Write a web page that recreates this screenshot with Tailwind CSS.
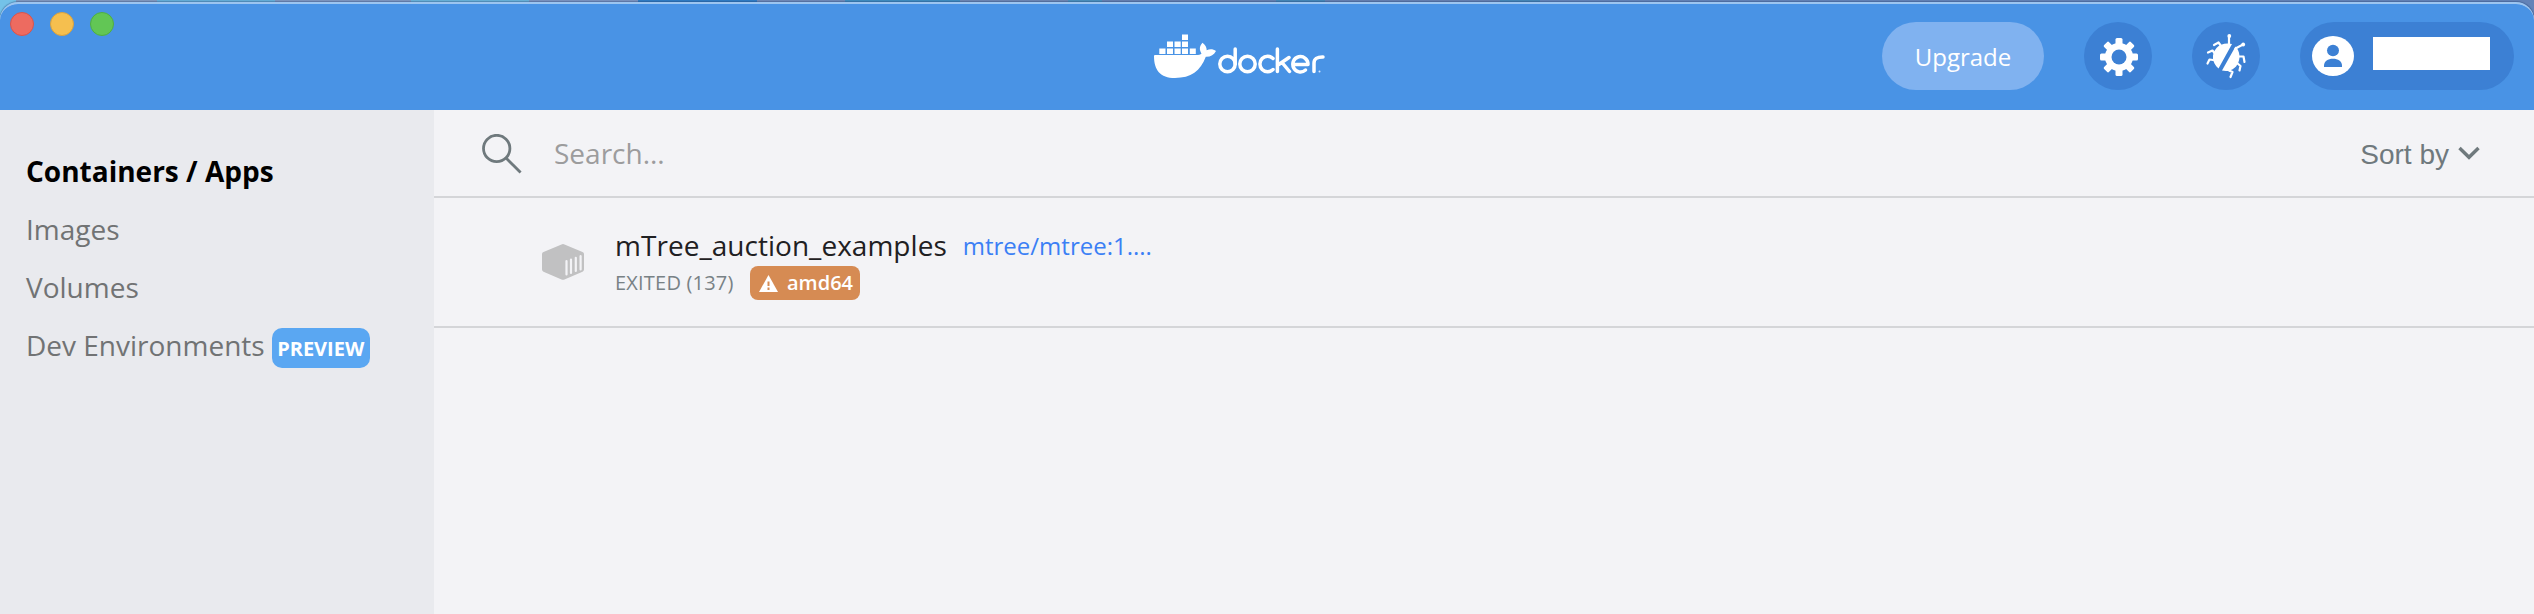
<!DOCTYPE html>
<html lang="en">
<head>
<meta charset="utf-8">
<title>Docker Desktop</title>
<script src="https://cdn.jsdelivr.net/npm/@tailwindcss/browser@4"></script>
</head>
<body class="h-[614px] w-[2534px] overflow-hidden bg-[#6d8fc0] font-['Open_Sans',sans-serif]">
<div class="flex h-full flex-col bg-[linear-gradient(90deg,#74c2e8_0_16px,#8299bf_16px_157px,#66b0da_157px_275px,#7f97c0_275px_411px,#69b3da_411px_529px,#7c94c0_529px_638px,#2f7cc4_638px_757px,#7089b8_757px_845px,#3f8cc0_845px_960px,#6d86b4_960px_1068px,#4a90bd_1068px_1102px,#6580b2_1102px_1276px,#4587b8_1276px_1325px,#6580b2_1325px_1500px,#4587b8_1500px_1540px,#6383b8_1540px)] pt-[2px]">
  <div class="flex min-h-0 grow flex-col overflow-hidden rounded-t-[18px] border-t-2 border-[#9cc5f0] bg-[#f3f3f6] shadow-[0_0_1px_1px_rgba(30,60,110,0.35)]">
    <header class="flex h-[106px] shrink-0 bg-[#4993e5]">
      <div class="flex w-[1130px] shrink-0 gap-4 pt-2 pl-[10px]">
        <span class="size-6 rounded-full border border-[#d8544b] bg-[#ed6b60]"></span>
        <span class="size-6 rounded-full border border-[#d9a23e] bg-[#f5bf4f]"></span>
        <span class="size-6 rounded-full border border-[#4fae43] bg-[#62c655]"></span>
      </div>
      <svg class="mt-[11px] h-20 w-[220px] shrink-0" viewBox="0 0 220 80" fill="none">
        <g fill="#fff">
          <path d="M52 19.500h6v5.500h-6zM37 26.500h6v5.500h-6zM44.500 26.500h6.200v5.500h-6.200zM52 26.500h6v5.500h-6zM29.300 33.500h6.200v5.500h-6.200zM37 33.500h6v5.500h-6zM44.500 33.500h6.200v5.500h-6.200zM52 33.500h6v5.500h-6zM59.800 33.500h6v5.500h-6z"/>
          <path d="M24 41Q24 40 25 40H66C69 40 70.500 39.500 71.500 38.500C69 34.500 69.500 31 72.500 27.800C75.500 30 76.700 32.500 76.700 35.200C80 33.700 83.500 34.200 86 36C84 40 80.500 42 75.800 41.800C70.500 56 61 63 45 63C30 63 24 55 24 41Z"/>
        </g>
        <g stroke="#fff" stroke-width="3.500" stroke-linecap="round" stroke-linejoin="round">
          <circle cx="97.500" cy="49" r="7.700"/><path d="M105.200 34V49"/>
          <circle cx="117.500" cy="49" r="7.700"/>
          <path d="M143 43.500A7.700 7.700 0 1 0 143 54.500M147.400 34V56.500M159 42.500L148 50M152 47.500L159.500 56.500"/>
          <path d="M163.500 49.500H178A7.600 7.700 0 1 0 175.500 55M184 56.500V48Q184 41.800 193 42"/>
        </g>
        <circle cx="189.500" cy="56.500" r="1" fill="#d5e6fa"/>
      </svg>
      <div class="flex flex-1 justify-end gap-10 pt-[18px] pr-5">
        <button class="flex h-[68px] w-[162px] items-center justify-center rounded-full bg-[#80b2f0] pt-[2px] text-2xl text-white">Upgrade</button>
        <button class="grid size-[68px] place-items-center rounded-full bg-[#3c80d4]">
          <svg class="mt-[2px] ml-[2px] size-[38px]" viewBox="-19 -19 38 38">
            <g fill="#fff">
              <rect x="-3.500" y="-19" width="7" height="38" rx="1.500"/>
              <rect x="-3.500" y="-19" width="7" height="38" rx="1.500" transform="rotate(45)"/>
              <rect x="-3.500" y="-19" width="7" height="38" rx="1.500" transform="rotate(90)"/>
              <rect x="-3.500" y="-19" width="7" height="38" rx="1.500" transform="rotate(135)"/>
              <circle r="14"/>
            </g>
            <circle r="7.500" fill="#3c80d4"/>
          </svg>
        </button>
        <button class="size-[68px] rounded-full bg-[#3c80d4]">
          <svg class="size-[68px]" viewBox="0 0 68 68" fill="none">
            <path fill="#fff" d="M40 22C34 20.500 28 22 24.500 26C19 32 20 41 26.500 46.500ZM43.500 24.500L30 48.500C36 50 42 48 45 43C49 37 48 29 43.500 24.500Z"/>
            <g stroke="#fff" stroke-width="2.200" stroke-linecap="round" stroke-linejoin="round">
              <path d="M37 22V14.500M29 24L26.500 20.500L22 23M22.500 31L20.500 28.500L16 30.500M21 38L17.500 37.500L15.500 41.500M43.500 26.500L51 22.500M47 34.500H51.500L52.500 40M45 41L48.500 44L47.500 48.500M37 48.500L40.500 50L38.500 55"/>
            </g>
            <g fill="#fff"><circle cx="37.300" cy="14" r="1.900"/><circle cx="51.200" cy="22.500" r="1.900"/></g>
          </svg>
        </button>
        <div class="flex h-[68px] w-[214px] items-start rounded-full bg-[#3c80d4] pl-3">
          <svg class="mt-[14px] h-10 w-[42px]" viewBox="0 0 42 40">
            <ellipse cx="21" cy="20" rx="21" ry="20" fill="#fff"/>
            <ellipse cx="21" cy="14.500" rx="6" ry="5.800" fill="#3c80d4"/>
            <path d="M12 31V29.500C12 25.500 16 22.800 21 22.800S30 25.500 30 29.500V31Z" fill="#3c80d4"/>
          </svg>
          <div class="mt-[15px] ml-[19px] h-[33px] w-[117px] bg-white"></div>
        </div>
      </div>
    </header>
    <div class="flex min-h-0 grow">
      <nav class="flex w-[434px] shrink-0 flex-col bg-[#e9eaee] pt-8 pl-[26px] text-[28px] leading-[58px] text-[#717374]">
        <a class="font-bold text-black">Containers / Apps</a>
        <a>Images</a>
        <a>Volumes</a>
        <a class="flex">Dev Environments<span class="mt-[12px] ml-[7px] flex h-10 w-[98px] items-center justify-center rounded-[10px] bg-[#5aa7f2] pt-px text-xl font-bold text-white">PREVIEW</span></a>
      </nav>
      <main class="flex grow flex-col">
        <div class="flex h-[88px] shrink-0 items-center border-b-2 border-[#d4d5d8] pr-[54px] pl-12">
          <svg class="mt-[2px] size-10" viewBox="0 0 40 40" fill="none" stroke="#6f797d" stroke-width="2.800"><circle cx="14.700" cy="14.500" r="13.200"/><path d="M24.300 24.300L38.600 38.600"/></svg>
          <span class="ml-[32px] text-[28px] text-[#9c9c9d]">Search...</span>
          <span class="mt-1 ml-auto font-['Liberation_Sans',sans-serif] text-[28px] text-[#6f797d]">Sort by</span>
          <svg class="ml-[9px] h-[14px] w-[22px]" viewBox="0 0 22 14" fill="none" stroke="#6f797d" stroke-width="3.400"><path d="M1.500 2L11 11.300L20.500 2"/></svg>
        </div>
        <div class="flex h-[130px] shrink-0 border-b-2 border-[#d4d5d8] pl-[108px]">
          <svg class="mt-[46px] h-9 w-[42px]" viewBox="0 0 42 36">
            <path d="M19.500 .500Q21 -.300 22.500 .500L40.500 8Q42 8.700 42 10V25.500Q42 27 40.500 27.700L22.500 35.500Q21 36.200 19.500 35.500L1.500 27.700Q0 27 0 25.500V10Q0 8.700 1.500 8Z" fill="#c1c1c2"/>
            <path d="M24.500 17V30.500M29 15.500V29M33.800 13.800V27M38.600 12.200V25.500" stroke="#f3f3f6" stroke-width="2.200" stroke-linecap="round"/>
          </svg>
          <div class="ml-[31px]">
            <div class="mt-[29px] flex h-[38px] items-center">
              <span class="pb-[3px] text-[28px] tracking-[0.03px] text-[#1f2022]">mTree_auction_examples</span>
              <a class="ml-4 pb-px text-2xl text-[#3b7ff5]">mtree/mtree:1....</a>
            </div>
            <div class="mt-px flex h-[34px] text-xl leading-[34px] text-[#788185]">
              <span class="w-[119px] tracking-[0.2px] whitespace-nowrap">EXITED (137)</span>
              <span class="ml-4 flex h-[34px] w-[110px] items-center rounded-[8px] bg-[#d68b53] pl-[9px] font-semibold text-white">
                <svg class="mt-px mr-[9px] h-[17px] w-[19px]" viewBox="0 0 19 17"><path d="M9.500 0L19 17H0Z" fill="#fff"/><path d="M9.500 6.500V11M9.500 12.500V15" stroke="#d68b53" stroke-width="2"/></svg>amd64</span>
            </div>
          </div>
        </div>
      </main>
    </div>
  </div>
</div>
</body>
</html>
